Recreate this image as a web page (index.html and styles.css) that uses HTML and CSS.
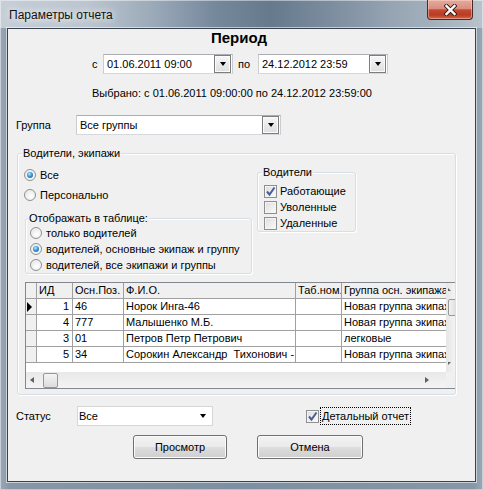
FILE: index.html
```html
<!DOCTYPE html>
<html lang="ru">
<head>
<meta charset="utf-8">
<title>Параметры отчета</title>
<link rel="stylesheet" href="styles.css">
</head>
<body>
<div class="window">
  <div class="titlebar">
    <span class="title">Параметры отчета</span>
    <div class="close">
      <svg width="13" height="12" viewBox="0 0 13 12">
        <path d="M2.5 2 L10.5 10 M10.5 2 L2.5 10" stroke="#3a1a14" stroke-width="4.2" stroke-linecap="square" fill="none"/>
        <path d="M2.5 2 L10.5 10 M10.5 2 L2.5 10" stroke="#ffffff" stroke-width="2.4" stroke-linecap="square" fill="none"/>
      </svg>
    </div>
  </div>
  <div class="client">
    <div class="heading">Период</div>

    <div class="date-row">
      <span class="lbl-c">с</span>
      <div class="combo date"><span class="combo-text">01.06.2011 09:00</span><span class="ddbtn"><i class="tri"></i></span></div>
      <span class="lbl-po">по</span>
      <div class="combo date"><span class="combo-text">24.12.2012 23:59</span><span class="ddbtn"><i class="tri"></i></span></div>
    </div>

    <div class="selected">Выбрано: с 01.06.2011 09:00:00 по 24.12.2012 23:59:00</div>

    <div class="group-row">
      <span class="lbl-group">Группа</span>
      <div class="combo group"><span class="combo-text">Все группы</span><span class="ddbtn"><i class="tri"></i></span></div>
    </div>

    <fieldset class="gb main">
      <legend>Водители, экипажи</legend>
      <div class="main-top">
        <div class="left-col">
          <div class="radio-row big"><span class="rb on"></span>Все</div>
          <div class="radio-row big"><span class="rb"></span>Персонально</div>
          <fieldset class="gb display">
            <legend>Отображать в таблице:</legend>
            <div class="radio-row"><span class="rb"></span>только водителей</div>
            <div class="radio-row"><span class="rb on"></span>водителей, основные экипаж и группу</div>
            <div class="radio-row"><span class="rb"></span>водителей, все экипажи и группы</div>
          </fieldset>
        </div>
        <fieldset class="gb drivers">
          <legend>Водители</legend>
          <div class="check-row"><span class="cb on"><svg width="11" height="11" viewBox="0 0 11 11"><path d="M2 5.5 L4.5 8.5 L9.5 1.5" stroke="#4a5c94" stroke-width="2" fill="none"/></svg></span>Работающие</div>
          <div class="check-row"><span class="cb"></span>Уволенные</div>
          <div class="check-row"><span class="cb"></span>Удаленные</div>
        </fieldset>
      </div>

      <div class="grid">
        <div class="grid-main">
          <div class="cells">
            <div class="row head">
              <div class="c ind"></div>
              <div class="c">ИД</div>
              <div class="c">Осн.Поз.</div>
              <div class="c">Ф.И.О.</div>
              <div class="c">Таб.ном.</div>
              <div class="c last">Группа осн. экипажа</div>
            </div>
            <div class="row">
              <div class="c ind"><i class="cur"></i></div>
              <div class="c num">1</div>
              <div class="c">46</div>
              <div class="c">Норок Инга-46</div>
              <div class="c"></div>
              <div class="c last">Новая группа экипажей</div>
            </div>
            <div class="row">
              <div class="c ind"></div>
              <div class="c num">4</div>
              <div class="c">777</div>
              <div class="c">Малышенко М.Б.</div>
              <div class="c"></div>
              <div class="c last">Новая группа экипажей</div>
            </div>
            <div class="row">
              <div class="c ind"></div>
              <div class="c num">3</div>
              <div class="c">01</div>
              <div class="c">Петров Петр Петрович</div>
              <div class="c"></div>
              <div class="c last">легковые</div>
            </div>
            <div class="row">
              <div class="c ind"></div>
              <div class="c num">5</div>
              <div class="c">34</div>
              <div class="c">Сорокин Александр&nbsp; Тихонович - 34</div>
              <div class="c"></div>
              <div class="c last">Новая группа экипажей</div>
            </div>
          </div>
          <div class="vscroll">
            <i class="arr-up"></i>
            <div class="vthumb"></div>
            <i class="arr-down"></i>
          </div>
        </div>
        <div class="hscroll">
          <i class="arr-left"></i>
          <div class="hthumb"></div>
          <i class="arr-right"></i>
          <div class="corner"></div>
        </div>
      </div>
    </fieldset>

    <div class="status-row">
      <span class="lbl-status">Статус</span>
      <div class="combo status"><span class="combo-text">Все</span><i class="tri"></i></div>
      <span class="cb on detail"><svg width="11" height="11" viewBox="0 0 11 11"><path d="M2 5.5 L4.5 8.5 L9.5 1.5" stroke="#4a5c94" stroke-width="2" fill="none"/></svg></span>
      <span class="focus-label">Детальный отчет</span>
    </div>

    <div class="buttons">
      <div class="btn view">Просмотр</div>
      <div class="btn cancel">Отмена</div>
    </div>
  </div>
</div>
</body>
</html>
```

FILE: styles.css
```css
* { box-sizing: border-box; }
html, body { margin: 0; padding: 0; }
body {
  width: 483px;
  height: 490px;
  overflow: hidden;
  font-family: "Liberation Sans", Arial, sans-serif;
  font-size: 11px;
  color: #000;
  background: #7d8fa2;
}

.window {
  width: 483px;
  height: 490px;
  padding: 0 7px 8px 7px;
  display: flex;
  flex-direction: column;
  background:
    linear-gradient(90deg, #c6ced7 0%, #bcc6d0 18%, #9aa9b8 32%, #74879b 45%, #66798d 56%, #7b8c9e 68%, #98a6b4 82%, #aab6c1 94%, #b9c3cc 100%) top / 100% 28px no-repeat,
    linear-gradient(90deg, #9aa8b6 0%, #8797a8 2%, #7d8fa2 50%, #8797a8 98%, #9aa8b6 100%);
  box-shadow: inset 0 0 0 1px rgba(255,255,255,0.45);
}

.titlebar {
  height: 28px;
  display: flex;
  align-items: flex-start;
}
.title {
  margin-left: 2px;
  padding-top: 8px;
  font-size: 12px;
  line-height: 15px;
  color: #111;
  text-shadow: 0 0 6px rgba(255,255,255,0.9), 0 0 10px rgba(255,255,255,0.7);
}
.close {
  margin-left: auto;
  margin-right: 3px;
  width: 46px;
  height: 20px;
  border: 1px solid #4a2a24;
  border-top: none;
  border-radius: 0 0 4px 4px;
  background: linear-gradient(#e6aa9c 0%, #d98f7f 45%, #c44a32 52%, #b93b24 78%, #d2664a 100%);
  box-shadow: inset 0 0 0 1px rgba(255,220,210,0.45);
  display: flex;
  align-items: center;
  justify-content: center;
}
.close svg { display: block; margin-top: 0px; }

.client {
  flex: 1;
  background: #f0f0f0;
  border: 1px solid #38434f;
  box-shadow: 0 0 0 1px rgba(255,255,255,0.55);
  display: flex;
  flex-direction: column;
}

.heading {
  font-weight: bold;
  font-size: 15px;
  line-height: 18px;
  text-align: center;
  padding-right: 5px;
}

.date-row {
  margin-top: 7px;
  display: flex;
  align-items: center;
  height: 20px;
  padding-left: 84px;
}
.lbl-c { width: 11px; }
.lbl-po { width: 25px; padding-left: 5px; }

.combo {
  height: 20px;
  background: #fff;
  border: 1px solid #b3b5b9;
  border-color: #abadb3 #c9ccd1 #d5d8dc #c9ccd1;
  display: flex;
  align-items: center;
  padding-left: 3px;
}
.combo-text { flex: 1; white-space: nowrap; overflow: hidden; }
.combo.date { width: 130px; }
.combo.group { width: 205px; }

.ddbtn {
  width: 17px;
  height: 18px;
  margin-right: 1px;
  border: 1px solid #7d7d7d;
  background: linear-gradient(#f6f6f6, #dedede);
  box-shadow: inset 0 0 0 1px #fbfbfb;
  display: flex;
  align-items: center;
  justify-content: center;
}
.tri {
  width: 0;
  height: 0;
  border-left: 3.5px solid transparent;
  border-right: 3.5px solid transparent;
  border-top: 4px solid #000;
}

.selected {
  margin-top: 12px;
  line-height: 14px;
  padding-left: 84px;
}

.group-row {
  margin-top: 15px;
  height: 20px;
  display: flex;
  align-items: center;
  padding-left: 8px;
}
.lbl-group { width: 60px; }

/* group boxes */
.gb {
  margin: 0;
  border: 1px solid #d5dfe5;
  border-radius: 3px;
  box-shadow: inset 1px 1px 0 #fff, 1px 1px 0 #fff;
  min-width: 0;
}
.gb > legend {
  padding: 0 1px;
  margin-left: -2px;
  line-height: 13px;
  background: #f0f0f0;
}

.main {
  margin-top: 12px;
  margin-left: 9px;
  width: 439px;
  padding: 5px 0 5px 6px;
}
.main-top {
  display: flex;
  align-items: flex-start;
}
.left-col { width: 233px; }

.radio-row {
  height: 16px;
  display: flex;
  align-items: center;
  white-space: nowrap;
}
.radio-row.big { height: 20px; }
.rb {
  width: 12px;
  height: 12px;
  margin-right: 4px;
  border-radius: 50%;
  border: 1px solid #8e8f8f;
  background: radial-gradient(circle at 60% 65%, #ffffff 0%, #f2f2f2 45%, #d4d4d4 100%);
  box-shadow: inset 0 0 0 1px #f4f4f4;
  display: flex;
  align-items: center;
  justify-content: center;
  flex: none;
}
.rb.on::after {
  content: "";
  width: 6px;
  height: 6px;
  border-radius: 50%;
  background: radial-gradient(circle at 40% 35%, #b6ecff 0%, #3a9ad6 45%, #0d4f8e 100%);
}

.display {
  margin-top: 7px;
  margin-left: 1px;
  width: 227px;
  padding: 0 0 0 4px;
}

.drivers {
  margin-top: 1px;
  width: 99px;
  padding: 4px 0 0 6px;
}
.check-row {
  height: 16px;
  display: flex;
  align-items: center;
  white-space: nowrap;
}
.cb {
  width: 13px;
  height: 13px;
  margin-right: 3px;
  border: 1px solid #8e8f8f;
  background: linear-gradient(135deg, #dcdcdc, #fcfcfc);
  box-shadow: inset 0 0 0 1px #f4f4f4;
  display: flex;
  align-items: center;
  justify-content: center;
  flex: none;
}
.cb svg { display: block; }

/* grid */
.grid {
  margin-top: 8px;
  margin-left: 1px;
  border: 1px solid #828790;
  border-right: none;
  height: 107px;
  overflow: hidden;
  background: #fff;
}
.grid-main {
  height: 89px;
  display: flex;
}
.cells { flex: 1; min-width: 0; }
.row {
  display: grid;
  grid-template-columns: 11px 36px 51px 172px 46px 1fr;
  height: 16px;
}
.c {
  border-right: 1px solid #a0a0a0;
  border-bottom: 1px solid #a0a0a0;
  padding-left: 2px;
  line-height: 15px;
  white-space: nowrap;
  overflow: hidden;
}
.c.last { border-right: none; }
.c.num { text-align: right; padding-right: 3px; }
.head .c { background: #f0f0f0; }
.c.ind {
  background: #f0f0f0;
  padding: 0;
  display: flex;
  align-items: center;
  justify-content: flex-start;
}
.cur {
  margin-left: 1px;
  width: 0;
  height: 0;
  border-left: 5px solid #000;
  border-top: 5px solid transparent;
  border-bottom: 5px solid transparent;
}

.vscroll {
  width: 9px;
  flex: none;
  background: linear-gradient(90deg, #e6e6e6, #f3f3f3);
  position: relative;
}
.arr-up {
  position: absolute;
  left: 2px;
  top: 5px;
  width: 0;
  height: 0;
  border-right: 3px solid transparent;
  border-bottom: 3px solid #606060;
}
.vthumb {
  position: absolute;
  left: 2px;
  top: 16px;
  width: 10px;
  height: 17px;
  border: 1px solid #979797;
  border-radius: 2px;
  background: linear-gradient(90deg, #f2f2f2, #dcdcdc);
}
.arr-down {
  position: absolute;
  left: 2px;
  top: 79px;
  width: 0;
  height: 0;
  border-right: 3px solid transparent;
  border-top: 3px solid #606060;
}

.hscroll {
  height: 16px;
  display: flex;
  align-items: center;
  background: linear-gradient(#e8e8e8, #f4f4f4);
  position: relative;
}
.arr-left {
  margin-left: 4px;
  width: 0;
  height: 0;
  border-top: 3.5px solid transparent;
  border-bottom: 3.5px solid transparent;
  border-right: 4px solid #606060;
}
.hthumb {
  margin-left: 9px;
  width: 15px;
  height: 15px;
  border: 1px solid #979797;
  border-radius: 2px;
  background: linear-gradient(#f4f4f4, #dcdcdc);
}
.arr-right {
  margin-left: auto;
  margin-right: 17px;
  width: 0;
  height: 0;
  border-top: 3.5px solid transparent;
  border-bottom: 3.5px solid transparent;
  border-left: 4px solid #606060;
}
.corner {
  width: 9px;
  height: 16px;
  background: #f0f0f0;
}

/* bottom */
.status-row {
  margin-top: 11px;
  height: 20px;
  display: flex;
  align-items: center;
  padding-left: 8px;
}
.lbl-status { width: 61px; }
.combo.status {
  width: 136px;
  border: 1px solid #d6d6d6;
  padding-left: 1px;
}
.combo.status .tri { margin-right: 6px; }
.cb.detail { margin-left: 93px; margin-right: 1px; }
.focus-label {
  height: 18px;
  border: 1px dotted #000;
  padding: 0 1px;
  line-height: 16px;
  white-space: nowrap;
}

.buttons {
  margin-top: 9px;
  display: flex;
  padding-left: 125px;
  gap: 30px;
}
.btn {
  height: 24px;
  border: 1px solid #707070;
  border-radius: 3px;
  background: linear-gradient(#f2f2f2 0%, #ebebeb 50%, #dddddd 51%, #cfcfcf 100%);
  box-shadow: inset 0 0 0 1px #fbfbfb;
  display: flex;
  align-items: center;
  justify-content: center;
}
.btn.view { width: 94px; }
.btn.cancel { width: 106px; }
```
